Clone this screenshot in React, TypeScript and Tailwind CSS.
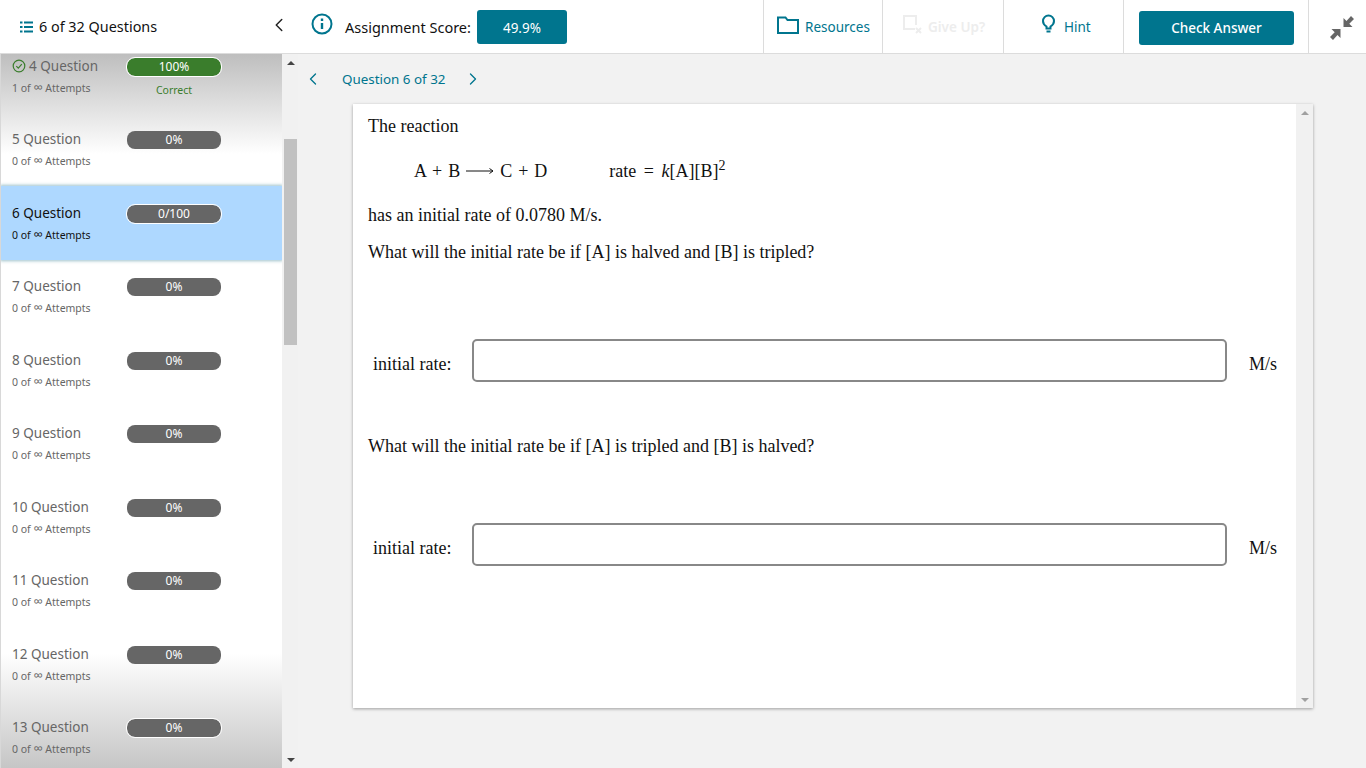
import { ChevronLeft, ChevronRight } from "lucide-react";

const sans = "font-['Noto_Sans','Open_Sans',sans-serif]";

type Row = { n: number; score: string; active?: boolean; correct?: boolean; ring?: boolean; attempts?: number };

const rows: Row[] = [
  { n: 4, score: "100%", correct: true, ring: true, attempts: 1 },
  { n: 5, score: "0%" },
  { n: 6, score: "0/100", active: true, ring: true },
  { n: 7, score: "0%" },
  { n: 8, score: "0%" },
  { n: 9, score: "0%" },
  { n: 10, score: "0%" },
  { n: 11, score: "0%" },
  { n: 12, score: "0%" },
  { n: 13, score: "0%", ring: true },
];

function QuestionRow({ row }: { row: Row }) {
  const pill = row.correct ? "bg-[#3a7d2c]" : "bg-[#666666]";
  return (
    <div
      className={`flex h-[73.5px] shrink-0 pl-[11px] ${
        row.active ? "relative z-10 bg-[#aed8ff] shadow-[0_0_3px_1px_rgba(40,120,140,0.45)] text-[#111]" : "text-[#666]"
      }`}
    >
      <div className="w-[115px] pt-[16.5px]">
        <div className="flex h-5 items-center text-[13.5px] leading-5">
          {row.correct && (
            <svg className="mr-[3px] h-[14px] w-[14px] text-[#3a7d2c]" viewBox="0 0 14 14" fill="none" stroke="currentColor" strokeWidth="1.2">
              <circle cx="7" cy="7" r="5.8" />
              <path d="M4.3 7.2l2 2 3.5-4" />
            </svg>
          )}
          {row.n} Question
        </div>
        <div className="mt-[3px] text-[10.5px] leading-[18px]">
          {row.attempts ?? 0} of <span className="text-[13px] leading-none">∞</span> Attempts
        </div>
      </div>
      <div className="w-[94px] pt-[18.5px] text-center">
        <div
          className={`flex h-[18px] items-center justify-center rounded-lg text-[12px] text-white ${pill} ${
            row.ring ? "outline outline-1 outline-white" : ""
          }`}
        >
          {row.score}
        </div>
        {row.correct && <div className="mt-[6.5px] text-[10.5px] leading-4 text-[#3a7d2c]">Correct</div>}
      </div>
    </div>
  );
}

function ScrollArrow({ down, dim }: { down?: boolean; dim?: boolean }) {
  const up = dim ? "border-b-[#a0a0a0]" : "border-b-[#444]";
  const dn = dim ? "border-t-[#a0a0a0]" : "border-t-[#444]";
  return (
    <div className="flex h-[17px] shrink-0 items-center justify-center">
      <div className={`h-0 w-0 border-x-[4px] border-x-transparent ${down ? `border-t-[4px] ${dn}` : `border-b-[4px] ${up}`}`} />
    </div>
  );
}

function AnswerRow({ className }: { className: string }) {
  return (
    <div className={`flex h-[43px] items-center ${className}`}>
      <span className="ml-[5px] mt-[7px] w-[99px]">initial rate:</span>
      <input className="h-[43px] w-[755px] rounded-[5px] border-2 border-[#888] bg-white outline-none" />
      <span className="ml-[22px] mt-[7px]">M/s</span>
    </div>
  );
}

export default function App() {
  return (
    <div className={`flex h-[768px] w-[1366px] flex-col overflow-hidden bg-[#f2f2f2] ${sans}`}>
      <header className="flex h-[54px] shrink-0 items-stretch border-b border-[#dcdcdc] bg-white">
        <div className="flex w-[298px] items-center pl-[20px]">
          <svg className="h-3 w-[13px] text-[#00758e]" viewBox="0 0 13 12" fill="currentColor">
            <rect x="0" y="0.5" width="2.5" height="2" />
            <rect x="4" y="0.5" width="9" height="2" />
            <rect x="0" y="5" width="2.5" height="2" />
            <rect x="4" y="5" width="9" height="2" />
            <rect x="0" y="9.5" width="2.5" height="2" />
            <rect x="4" y="9.5" width="9" height="2" />
          </svg>
          <span className="ml-[6px] text-[14.4px] text-[#111]">6 of 32 Questions</span>
          <ChevronLeft className="ml-[111px] -mt-[3px] h-[22px] w-[22px] text-[#222]" strokeWidth={1.6} />
        </div>
        <div className="flex w-[465px] items-center pl-[13px]">
          <svg className="-mt-[5px] h-[22px] w-[22px] text-[#00758e]" viewBox="0 0 22 22" fill="none" stroke="currentColor" strokeWidth="2">
            <circle cx="11" cy="11" r="9.5" />
            <path d="M11 10v6" strokeWidth="2.4" />
            <path d="M11 5.500v2.500" strokeWidth="2.4" />
          </svg>
          <span className="ml-[12px] mt-[2px] text-[14.5px] text-[#111]">Assignment Score:</span>
          <div className="ml-[6px] flex h-[34px] w-[90px] items-center justify-center rounded-[3px] bg-[#00758e] pt-[3px] text-[13.5px] text-white">49.9%</div>
        </div>
        <div className="flex w-[119px] items-center border-l border-[#dcdcdc] pl-[13px] text-[#00758e]">
          <svg className="-mt-[4px] h-[18px] w-[22px]" viewBox="0 0 22 18" fill="none" stroke="currentColor" strokeWidth="2">
            <path d="M1 17V1.500h7.500L10.500 4H21v13z" />
          </svg>
          <span className="ml-[6px] mt-[2px] text-[13.5px]">Resources</span>
        </div>
        <div className="flex w-[121px] items-center border-l border-[#dcdcdc] pl-[20px] text-[#ededed]">
          <svg className="-mt-[3px] h-[20px] w-[19px]" viewBox="0 0 19 20" fill="none" stroke="currentColor" strokeWidth="2">
            <path d="M12 14H1V1h12v9" />
            <path d="M13 13l5 5M18 13l-5 5" />
          </svg>
          <span className="ml-[6px] mt-[2px] text-[13.5px] font-semibold">Give Up?</span>
        </div>
        <div className="flex w-[120px] items-center border-l border-[#dcdcdc] pl-[38px]">
          <svg className="-mt-[6px] h-[20px] w-[13px] text-[#00758e]" viewBox="0 0 13 20" fill="none" stroke="currentColor" strokeWidth="2">
            <path d="M4.500 14.500V12.500C2.500 11.300 1 9.500 1 7a5.500 5.500 0 0 1 11 0c0 2.500-1.500 4.300-3.500 5.500v2z" />
            <path d="M4.500 17.500h4" />
          </svg>
          <span className="ml-[9px] mt-[2px] text-[13.5px] text-[#00758e]">Hint</span>
        </div>
        <div className="flex w-[185px] items-center border-l border-[#dcdcdc] pl-[15px]">
          <button className="mt-[2px] h-[34px] w-[155px] rounded-[3px] bg-[#00758e] pt-[2px] text-[13.5px] font-medium text-white">Check Answer</button>
        </div>
        <div className="flex flex-1 items-center border-l border-[#dcdcdc] pl-[21px]">
          <svg className="mt-[3px] h-6 w-6 text-[#666]" viewBox="0 0 24 24" fill="currentColor">
            <path d="M13.500 2v9h9l-3.200-3.200 4.700-4.700L21 .1 16.500 5z" />
            <path d="M10.500 22v-9h-9l3.200 3.200-4.700 4.700L3 23.900 7.500 19z" />
          </svg>
        </div>
      </header>

      <div className="flex min-h-0 flex-1">
        <aside className="flex w-[298px] shrink-0">
          <div className="flex w-[282px] flex-col overflow-hidden border-l border-[#d8d8d8] bg-[linear-gradient(to_bottom,#bebebe_0,#ffffff_100px,#ffffff_600px,#c6c6c6_714px)]">
            <div className="-mt-[15px] flex flex-col">
              {rows.map((row) => (
                <QuestionRow key={row.n} row={row} />
              ))}
            </div>
          </div>
          <div className="flex w-4 flex-col bg-[#f1f1f1] pl-px">
            <ScrollArrow />
            <div className="ml-px mt-[68px] h-[206px] w-[13px] bg-[#c1c1c1]" />
            <div className="flex-1" />
            <ScrollArrow down />
          </div>
        </aside>

        <main className="flex-1 pl-[55px]">
          <nav className="flex h-[50px] items-center text-[#00758e]">
            <ChevronLeft className="-ml-[50px] h-[20px] w-[20px]" strokeWidth={1.6} />
            <span className="ml-[19px] text-[13.4px]">Question 6 of 32</span>
            <ChevronRight className="ml-[17px] h-[20px] w-[20px]" strokeWidth={1.6} />
          </nav>
          <section className="flex h-[604px] w-[960px] bg-white font-['Liberation_Serif',serif] text-[18px] leading-5 text-[#111] shadow-[0_1px_3px_rgba(0,0,0,0.35)]">
            <div className="flex-1 pl-[15px] pt-[12px]">
              <p>The reaction</p>
              <div className="mt-[25px] flex h-5 items-center pl-[46px] [word-spacing:1.500px]">
                <span>A + B</span>
                <svg className="mx-[6px] h-2 w-7" viewBox="0 0 28 8" fill="none" stroke="currentColor" strokeWidth="1">
                  <path d="M0 4h27M23.500 1.500L27 4l-3.500 2.500" />
                </svg>
                <span>C + D</span>
                <span className="ml-[62px] [word-spacing:3px]">
                  rate = <i>k</i>[A][B]<sup className="text-[14px]">2</sup>
                </span>
              </div>
              <p className="mt-[24px]">has an initial rate of 0.0780 M/s.</p>
              <p className="mt-[17px]">What will the initial rate be if [A] is halved and [B] is tripled?</p>
              <AnswerRow className="mt-[77px]" />
              <p className="mt-[54px]">What will the initial rate be if [A] is tripled and [B] is halved?</p>
              <AnswerRow className="mt-[67px]" />
            </div>
            <div className="flex w-[17px] flex-col justify-between bg-[#f1f1f1]">
              <ScrollArrow dim />
              <ScrollArrow down dim />
            </div>
          </section>
        </main>
      </div>
    </div>
  );
}
